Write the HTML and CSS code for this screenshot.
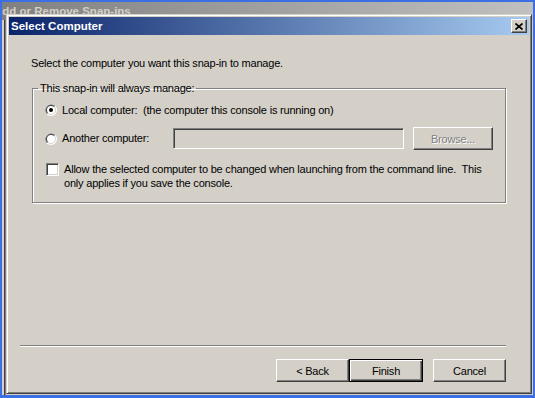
FILE: index.html
```html
<!DOCTYPE html>
<html lang="en">
<head>
  <meta charset="UTF-8" />
  <title>Select Computer</title>
  <link rel="stylesheet" href="styles.css">
</head>
<body>
  <div class="desktop">
    <div class="window parent">
      <div class="caption inactive"><span class="caption-text">Add or Remove Snap-ins</span></div>
    </div>

    <div class="window dialog">
      <div class="caption">
        <span class="caption-text">Select Computer</span>
        <button class="close" title="Close">
          <svg width="8" height="7" viewBox="0 0 8 7"><path d="M0.5 0.5 L7.5 6.5 M7.5 0.5 L0.5 6.5" stroke="#000" stroke-width="1.7" fill="none"/></svg>
        </button>
      </div>

      <div class="content">
        <p class="intro">Select the computer you want this snap-in to manage.</p>
        <fieldset class="group">
          <legend>This snap-in will always manage:</legend>

          <label class="option">
            <span class="radio">
              <svg width="12" height="12" viewBox="0 0 12 12">
                <circle cx="6" cy="6" r="6" fill="#fff"/>
                <path d="M10.24 1.76 A6 6 0 0 0 1.76 10.24 Z" fill="#808080"/>
                <circle cx="6" cy="6" r="5" fill="#d4d0c8"/>
                <path d="M9.54 2.46 A5 5 0 0 0 2.46 9.54 Z" fill="#404040"/>
                <circle cx="6" cy="6" r="4" fill="#fff"/>
                <circle cx="6" cy="6" r="2" fill="#000"/>
              </svg>
            </span>
            <span>Local computer:&nbsp; (the computer this console is running on)</span>
          </label>

          <div class="option other">
            <label class="choice">
              <span class="radio">
                <svg width="12" height="12" viewBox="0 0 12 12">
                  <circle cx="6" cy="6" r="6" fill="#fff"/>
                  <path d="M10.24 1.76 A6 6 0 0 0 1.76 10.24 Z" fill="#808080"/>
                  <circle cx="6" cy="6" r="5" fill="#d4d0c8"/>
                  <path d="M9.54 2.46 A5 5 0 0 0 2.46 9.54 Z" fill="#404040"/>
                  <circle cx="6" cy="6" r="4" fill="#fff"/>
                </svg>
              </span>
              <span>Another computer:</span>
            </label>
            <input class="edit" type="text" disabled />
            <button class="btn browse" disabled>Browse...</button>
          </div>

          <label class="option check-row">
            <span class="check"></span>
            <span class="check-text">Allow the selected computer to be changed when launching from the command line.&nbsp; This<br>only applies if you save the console.</span>
          </label>
        </fieldset>
      </div>

      <div class="footer">
        <div class="separator"></div>
        <div class="buttons">
          <button class="btn">&lt; Back</button>
          <button class="btn default">Finish</button>
          <button class="btn cancel">Cancel</button>
        </div>
      </div>
    </div>
  </div>
</body>
</html>
```

FILE: styles.css
```css
* {
  box-sizing: border-box;
}
body {
  margin: 0;
  background: #3c6ee6;
  font-family: "Liberation Sans", Arial, sans-serif;
  font-size: 11px;
  color: #000;
}
.desktop {
  position: relative;
  width: 535px;
  height: 398px;
  overflow: hidden;
}
.window {
  position: absolute;
  background: #d4d0c8;
}

/* window behind the dialog */
.parent {
  left: 2px;
  top: 2px;
  width: 531px;
  height: 393px;
  box-shadow: inset 2px 0 #d4d0c8, inset 3px 0 #404040, inset 4px 0 #808080;
}
.caption {
  height: 18px;
  display: flex;
  align-items: center;
  padding: 0 2px;
  background: linear-gradient(to right, #0a246a, #a6caf0);
  color: #fff;
  font-weight: bold;
  font-size: 11.5px;
  white-space: nowrap;
}
.caption.inactive {
  padding: 0;
  overflow: hidden;
  background: linear-gradient(to right, #808080, #c0c0c0);
  color: #d4d0c8;
}
.inactive .caption-text {
  margin-left: -8px;
}
.close {
  margin-left: auto;
  width: 16px;
  height: 14px;
  padding: 0;
  display: flex;
  align-items: center;
  justify-content: center;
  background: #d4d0c8;
  border: 1px solid;
  border-color: #fff #404040 #404040 #fff;
  box-shadow: inset -1px -1px #808080;
}

/* dialog */
.dialog {
  left: 6px;
  top: 14px;
  width: 526px;
  height: 380px;
  padding: 2px;
  display: flex;
  flex-direction: column;
  border: 1px solid;
  border-color: #d4d0c8 #404040 #404040 #d4d0c8;
  box-shadow: inset 1px 1px #fff, inset -1px -1px #808080;
}
.content {
  flex: 1;
  padding: 22px 22px 0 22px;
  letter-spacing: -0.2px;
}
.intro {
  margin: 0;
  line-height: 13px;
}
.group {
  width: 474px;
  min-width: 0;
  margin: 12px 0 0 1px;
  padding: 7px 0 12px 12px;
  border: 1px solid #808080;
  box-shadow: inset 1px 1px #fff, 1px 1px #fff;
}
.group legend {
  margin-left: -7px;
  padding: 0 2px;
  line-height: 13px;
}
.option {
  display: flex;
  align-items: center;
  gap: 5px;
  height: 16px;
  line-height: 13px;
}
.radio {
  display: flex;
  width: 12px;
  height: 12px;
}
.option.other {
  gap: 0;
  height: 23px;
  margin-top: 9px;
}
.choice {
  display: flex;
  align-items: center;
  gap: 5px;
  width: 128px;
}
.edit {
  width: 231px;
  height: 21px;
  margin: 0;
  padding: 0;
  background: #d4d0c8;
  border: 1px solid;
  border-color: #808080 #fff #fff #808080;
  box-shadow: inset 1px 1px #404040, inset -1px -1px #d4d0c8;
}
.check-row {
  align-items: flex-start;
  height: auto;
  margin-top: 12px;
}
.check {
  width: 13px;
  height: 13px;
  margin: 1px 0 0 1px;
  background: #fff;
  border: 1px solid;
  border-color: #808080 #fff #fff #808080;
  box-shadow: inset 1px 1px #404040, inset -1px -1px #d4d0c8;
}
.check-text {
  line-height: 14px;
}

/* buttons */
.btn {
  width: 73px;
  height: 23px;
  padding: 0;
  font-family: inherit;
  font-size: 11px;
  letter-spacing: -0.2px;
  color: #000;
  background: #d4d0c8;
  border: 1px solid;
  border-color: #fff #404040 #404040 #fff;
  box-shadow: inset -1px -1px #808080;
}
.btn.default {
  width: 74px;
  border-color: #000;
  box-shadow: inset 1px 1px #fff, inset -1px -1px #404040, inset -2px -2px #808080;
}
.btn.browse {
  width: 80px;
  margin-left: 9px;
  color: #808080;
  text-shadow: 1px 1px #fff;
}
.btn.cancel {
  margin-left: 10px;
}
.footer {
  padding: 0 23px 9px 11px;
}
.separator {
  height: 2px;
  border-top: 1px solid #808080;
  border-bottom: 1px solid #fff;
}
.buttons {
  display: flex;
  justify-content: flex-end;
  margin-top: 12px;
}
```
